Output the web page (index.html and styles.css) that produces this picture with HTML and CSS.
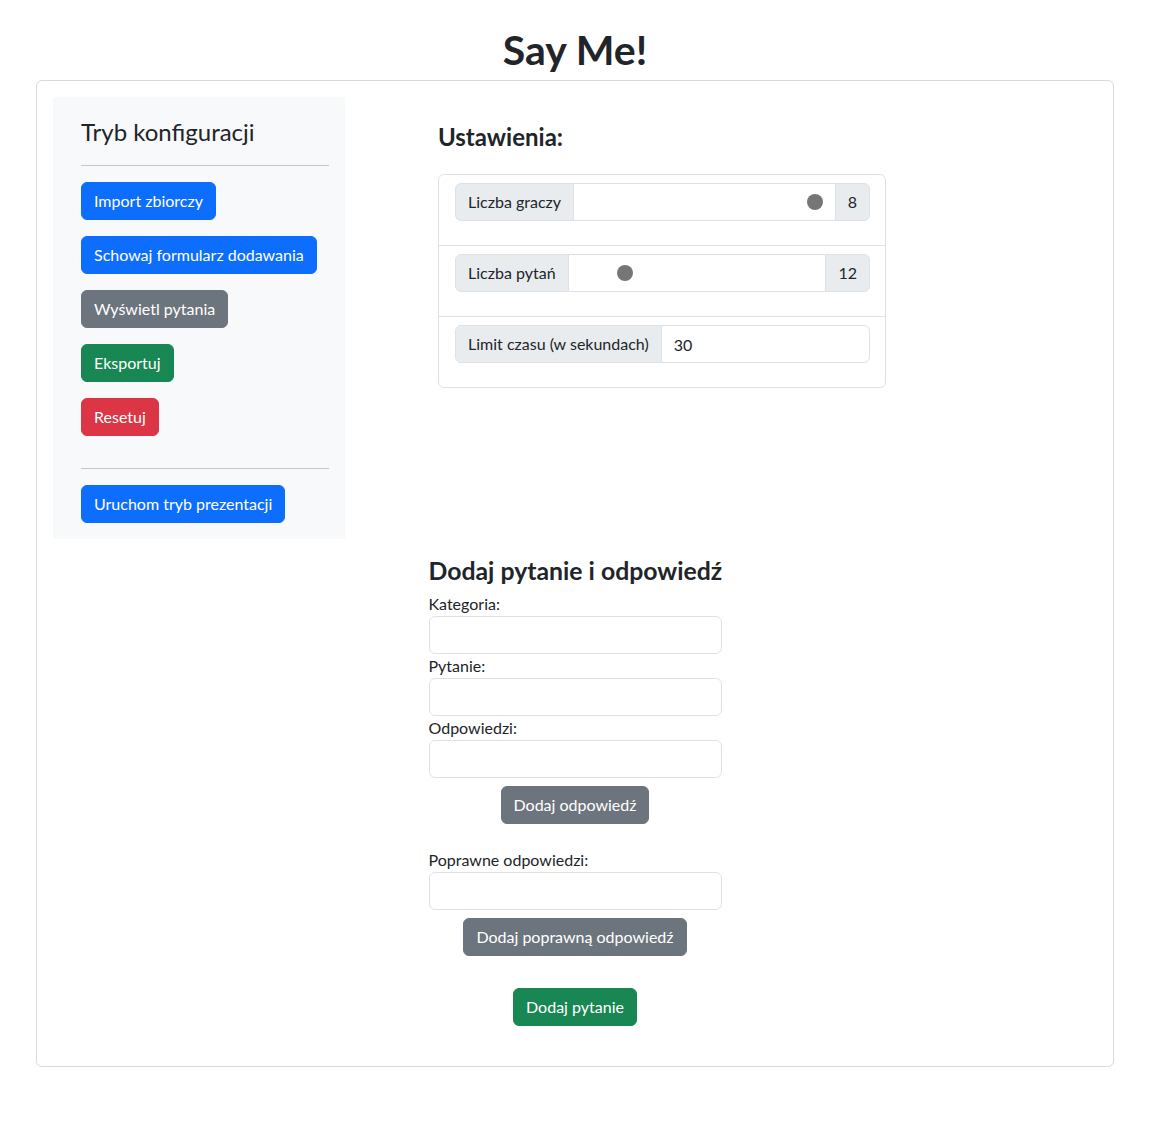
FILE: index.html
```html
<!DOCTYPE html>
<html lang="pl">
<head>
<meta charset="utf-8">
<title>Say Me!</title>
<link rel="stylesheet" href="styles.css">
</head>
<body>
<h1 class="title">Say Me!</h1>
<div class="card">
  <div class="top-row">
    <aside class="sidebar">
      <h4 class="sidebar-title">Tryb konfiguracji</h4>
      <hr class="divider">
      <button class="btn btn-primary">Import zbiorczy</button>
      <button class="btn btn-primary">Schowaj formularz dodawania</button>
      <button class="btn btn-secondary">Wyświetl pytania</button>
      <button class="btn btn-success">Eksportuj</button>
      <button class="btn btn-danger">Resetuj</button>
      <hr class="divider">
      <button class="btn btn-primary btn-last">Uruchom tryb prezentacji</button>
    </aside>
    <section class="settings">
      <h4 class="settings-title">Ustawienia:</h4>
      <ul class="list-group">
        <li class="list-item">
          <div class="input-group">
            <span class="ig-text">Liczba graczy</span>
            <input class="ig-range" type="range" min="2" max="8" value="8">
            <span class="ig-text ig-value">8</span>
          </div>
        </li>
        <li class="list-item">
          <div class="input-group">
            <span class="ig-text">Liczba pytań</span>
            <input class="ig-range" type="range" min="10" max="22" value="12">
            <span class="ig-text ig-value">12</span>
          </div>
        </li>
        <li class="list-item">
          <div class="input-group">
            <span class="ig-text">Limit czasu (w sekundach)</span>
            <input class="ig-input" type="number" value="30">
          </div>
        </li>
      </ul>
    </section>
  </div>
  <section class="add-form">
    <h3 class="form-title">Dodaj pytanie i odpowiedź</h3>
    <label class="form-label">Kategoria:</label>
    <input class="form-control" type="text">
    <label class="form-label">Pytanie:</label>
    <input class="form-control" type="text">
    <label class="form-label">Odpowiedzi:</label>
    <input class="form-control" type="text">
    <div class="btn-row btn-row-tight"><button class="btn btn-secondary">Dodaj odpowiedź</button></div>
    <label class="form-label form-label-spaced">Poprawne odpowiedzi:</label>
    <input class="form-control" type="text">
    <div class="btn-row btn-row-tight"><button class="btn btn-secondary">Dodaj poprawną odpowiedź</button></div>
    <div class="btn-row btn-row-final"><button class="btn btn-success">Dodaj pytanie</button></div>
  </section>
</div>
</body>
</html>
```
FILE: styles.css
```css
* { box-sizing: border-box; }
html, body { margin: 0; padding: 0; }
body {
  font-family: "Lato", "Noto Sans", sans-serif;
  font-size: 16px;
  line-height: 1.5;
  color: #212529;
  background: #fff;
}
.title {
  margin: 26px 0 6px 36px;
  width: 1078px;
  text-align: center;
  font-size: 41px;
  line-height: 48px;
  font-weight: 700;
}
.card {
  margin-left: 36px;
  width: 1078px;
  border: 1px solid #d8d9da;
  border-radius: 6px;
  padding: 16px;
}
.top-row {
  display: flex;
  align-items: flex-start;
}
.sidebar {
  width: 292px;
  flex: none;
  background: #f8f9fa;
  padding: 20px 16px 16px 28px;
  display: flex;
  flex-direction: column;
  align-items: flex-start;
}
.sidebar-title {
  margin: 0 0 3px;
  font-size: 24px;
  line-height: 29px;
  font-weight: 400;
}
.divider {
  align-self: stretch;
  margin: 16px 0;
  border: 0;
  border-top: 1px solid #c6c7c8;
  height: 0;
}
.btn {
  font-family: inherit;
  font-size: 16px;
  line-height: 24px;
  padding: 6px 12px;
  border: 1px solid transparent;
  border-radius: 6px;
  color: #fff;
  cursor: pointer;
}
.sidebar .btn { margin-bottom: 16px; }
.sidebar .btn-last { margin-bottom: 0; }
.btn-primary { background: #0d6efd; border-color: #0d6efd; }
.btn-secondary { background: #6c757d; border-color: #6c757d; }
.btn-success { background: #198754; border-color: #198754; }
.btn-danger { background: #dc3545; border-color: #dc3545; }

.settings {
  margin-left: 93px;
  width: 448px;
}
.settings-title {
  margin: 25px 0 23px;
  font-size: 24px;
  line-height: 29px;
  font-weight: 700;
}
.list-group {
  list-style: none;
  margin: 0;
  padding: 0;
  border: 1px solid #dee2e6;
  border-radius: 6px;
}
.list-item {
  padding: 8px 15px 24px 16px;
  border-top: 1px solid #dee2e6;
}
.list-item:first-child { border-top: 0; }
.input-group {
  display: flex;
  height: 38px;
}
.ig-text {
  display: flex;
  align-items: center;
  padding: 6px 12px;
  background: #e9ecef;
  border: 1px solid #dee2e6;
  white-space: nowrap;
  border-radius: 6px 0 0 6px;
}
.ig-value {
  border-radius: 0 6px 6px 0;
  margin-left: -1px;
}
.ig-range {
  -webkit-appearance: none;
  appearance: none;
  flex: 1;
  min-width: 0;
  margin: 0 0 0 -1px;
  height: 38px;
  padding: 0 12px;
  background: #fff;
  border: 1px solid #dee2e6;
}
.ig-range::-webkit-slider-runnable-track {
  height: 16px;
  background: transparent;
  border: 0;
}
.ig-range::-webkit-slider-thumb {
  -webkit-appearance: none;
  appearance: none;
  width: 16px;
  height: 16px;
  border-radius: 50%;
  background: #767676;
  border: 0;
}
.ig-input {
  flex: 1;
  min-width: 0;
  margin-left: -1px;
  font-family: inherit;
  font-size: 16px;
  color: #212529;
  padding: 6px 12px;
  border: 1px solid #dee2e6;
  border-radius: 0 6px 6px 0;
  -moz-appearance: textfield;
}
.ig-input::-webkit-outer-spin-button,
.ig-input::-webkit-inner-spin-button { -webkit-appearance: none; margin: 0; }

.add-form {
  width: 293px;
  margin: 17px auto 0;
  display: flex;
  flex-direction: column;
}
.form-title {
  margin: 0 0 7px;
  font-size: 24.8px;
  line-height: 29px;
  font-weight: 700;
  white-space: nowrap;
}
.form-label {
  display: block;
  line-height: 24px;
}
.form-label-spaced { margin-top: 24px; }
.form-control {
  display: block;
  width: 100%;
  height: 38px;
  font-family: inherit;
  font-size: 16px;
  padding: 6px 12px;
  border: 1px solid #dee2e6;
  border-radius: 6px;
}
.btn-row { text-align: center; }
.btn-row .btn { display: inline-block; }
.btn-row-tight { margin-top: 8px; }
.btn-row-final { margin-top: 32px; margin-bottom: 24px; }
```
